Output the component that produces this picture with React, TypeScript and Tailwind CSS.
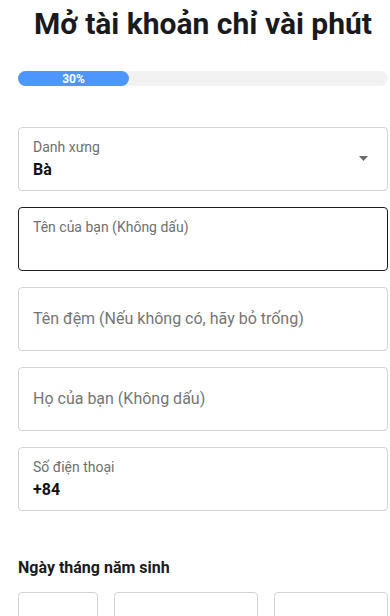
import React from "react";

type FieldProps = {
  label: string;
  value?: string;
  focused?: boolean;
  select?: boolean;
};

function Field({ label, value, focused, select }: FieldProps) {
  const filled = value !== undefined;
  return (
    <div
      className={`relative h-16 rounded-[4px] border ${
        focused ? "border-[#1f1f1f]" : "border-[#d3d3d3]"
      } bg-white px-[14px]`}
    >
      {filled ? (
        <div className="flex flex-col pt-[10px]">
          <span className="text-[14px] leading-[18px] text-[#6f6f6f]">{label}</span>
          <span className="mt-[4px] text-[16px] leading-[20px] font-bold text-[#111]">{value}</span>
        </div>
      ) : focused ? (
        <div className="pt-[7px]">
          <span className="text-[14px] leading-[18px] text-[#6f6f6f]">{label}</span>
        </div>
      ) : (
        <div className="flex h-full items-center">
          <span className="text-[16px] text-[#757575]">{label}</span>
        </div>
      )}
      {select && (
        <svg
          className="absolute right-[19px] top-[28px]"
          width="9"
          height="5"
          viewBox="0 0 9 5"
        >
          <path d="M0 0h9L4.5 5z" fill="#6b6b6b" />
        </svg>
      )}
    </div>
  );
}

export default function App() {
  return (
    <div
      className="min-h-screen bg-white pl-[18px] pr-[2px] pt-[6px] text-[#1c1c1c]"
      style={{ fontFamily: "Roboto, 'Noto Sans', sans-serif" }}
    >
      {/* Title */}
      <h1 className="text-center text-[30px] leading-[36px] font-bold text-[#1a1a1e]">
        Mở tài khoản chỉ vài phút
      </h1>

      {/* Progress */}
      <div className="mt-[29px] h-[15px] w-full rounded-full bg-[#f2f2f2]">
        <div className="flex h-full w-[30%] items-center justify-center rounded-full bg-[#4d96ff]">
          <span className="text-[12px] leading-none font-bold text-white">30%</span>
        </div>
      </div>

      {/* Form */}
      <div className="mt-[41px] flex flex-col gap-4">
        <Field label="Danh xưng" value="Bà" select />
        <Field label="Tên của bạn (Không dấu)" focused />
        <Field label="Tên đệm (Nếu không có, hãy bỏ trống)" />
        <Field label="Họ của bạn (Không dấu)" />
        <Field label="Số điện thoại" value="+84" />
      </div>

      {/* Birthday */}
      <h2 className="mt-[45px] text-[16px] leading-[24px] font-bold text-[#1a1a1e]">
        Ngày tháng năm sinh
      </h2>
      <div className="mt-[12px] flex gap-4">
        <div className="h-16 w-[80px] rounded-[4px] border border-[#d3d3d3]" />
        <div className="h-16 w-[144px] rounded-[4px] border border-[#d3d3d3]" />
        <div className="h-16 flex-1 rounded-[4px] border border-[#d3d3d3]" />
      </div>
    </div>
  );
}
